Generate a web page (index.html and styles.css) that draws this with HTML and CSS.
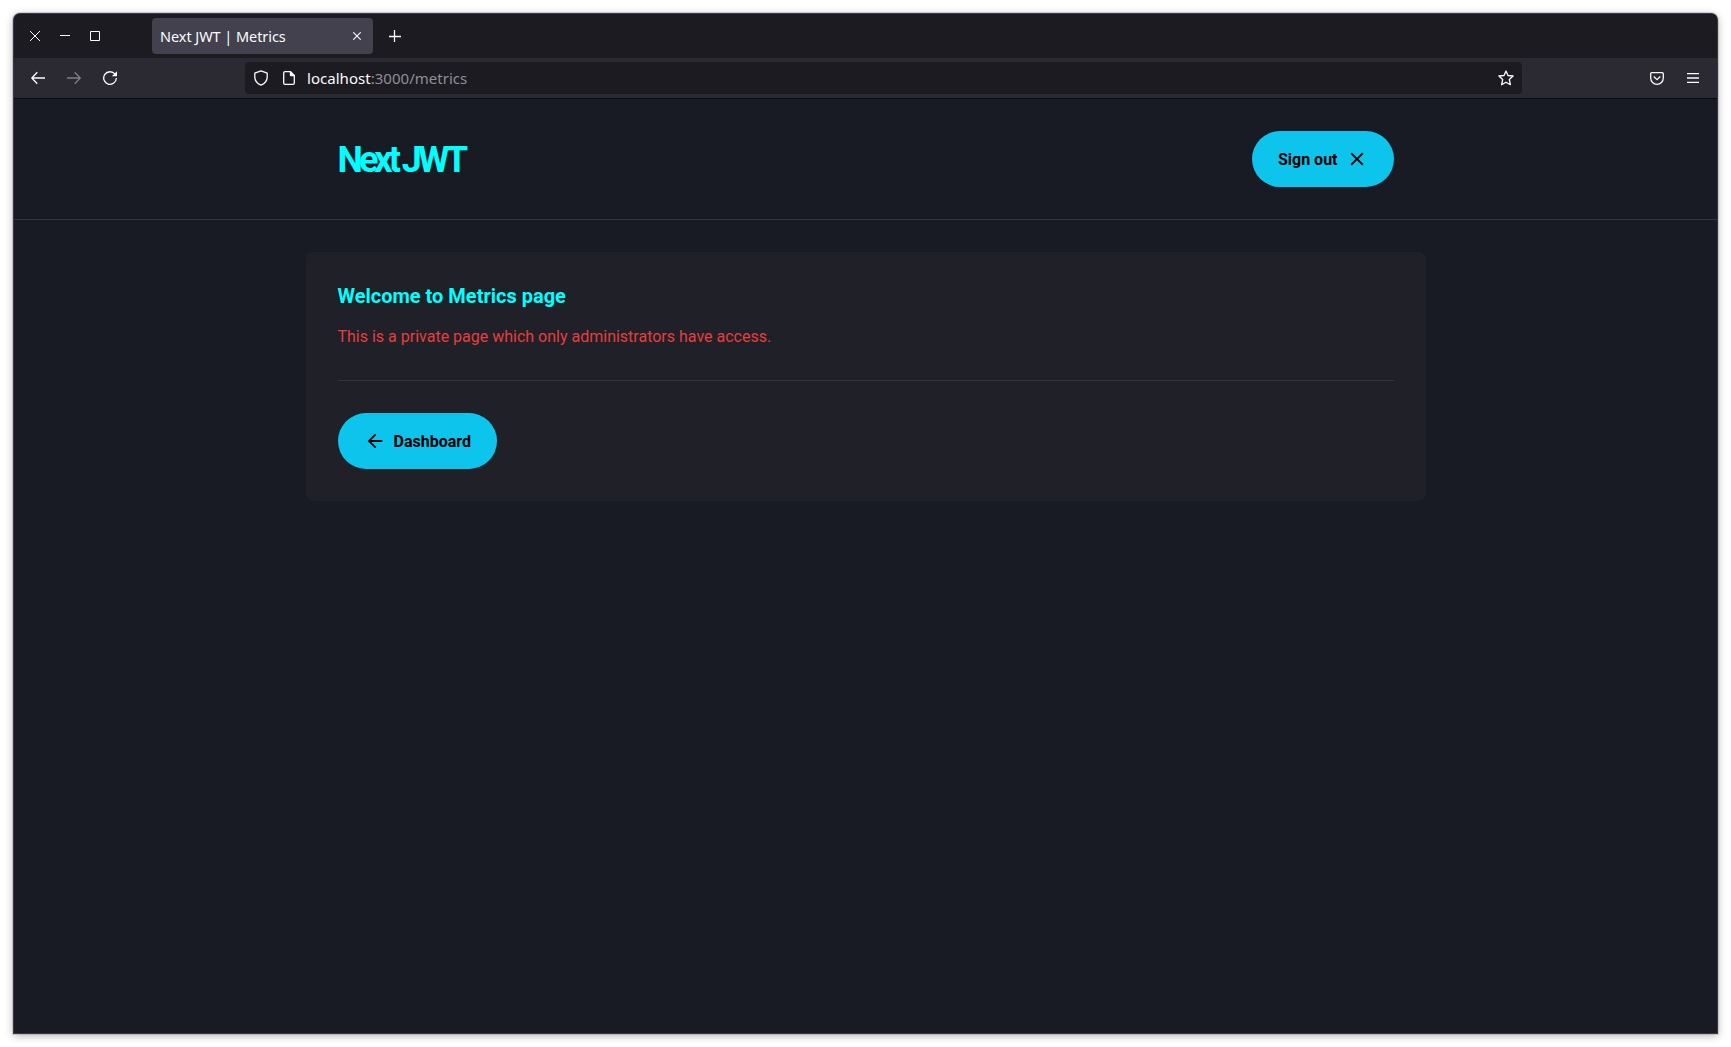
FILE: index.html
```html
<!DOCTYPE html>
<html lang="en">
<head>
<meta charset="utf-8">
<title>Next JWT | Metrics</title>
<link rel="stylesheet" href="styles.css">
</head>
<body>
<div class="window">
  <div class="titlebar">
    <div class="controls">
      <svg width="10" height="10" viewBox="0 0 10 10"><path d="M0 0l10 10M10 0L0 10"/></svg>
      <svg width="10" height="10" viewBox="0 0 10 10"><path d="M0 4.5h10"/></svg>
      <svg width="10" height="10" viewBox="0 0 10 10"><path d="M.5 .5h9v9h-9z"/></svg>
    </div>
    <div class="tab">
      <span class="tab-title">Next JWT | Metrics</span>
      <svg width="8" height="8" viewBox="0 0 8 8"><path d="M.3 .3l7.4 7.4M7.7 .3L.3 7.7"/></svg>
    </div>
    <svg class="new-tab" width="12" height="12" viewBox="0 0 12 12"><path d="M5.500 0v12M0 6.500h12"/></svg>
  </div>
  <div class="toolbar">
    <div class="nav">
      <svg width="14" height="14" viewBox="0 0 14 14"><path d="M14 7H1M6.3 1.3L.8 7l5.5 5.7"/></svg>
      <svg class="disabled" width="14" height="14" viewBox="0 0 14 14"><path d="M0 7h13M7.7 1.3L13.2 7l-5.5 5.7"/></svg>
      <svg width="14" height="14" viewBox="0 0 14 14"><path d="M12 3.2A6.3 6.3 0 1 0 13.3 7"/><path class="solid" d="M14 .2v5.1H8.8z"/></svg>
    </div>
    <div class="urlbar">
      <svg width="14" height="16" viewBox="0 0 14 16"><path d="M7 .8L13.2 3.2V7c0 3.8-2.4 6.6-6.2 8.2C3.200 13.600.8 10.800.8 7V3.200z"/></svg>
      <svg class="doc" width="12" height="14" viewBox="0 0 12 14"><path d="M2 .7h5.500l3.800 3.800V12a1.300 1.300 0 0 1-1.300 1.300H2A1.300 1.300 0 0 1 .7 12V2A1.300 1.300 0 0 1 2 .7z"/><path class="solid" d="M6.800 .5h1l3.700 3.700v1H8.100a1.300 1.300 0 0 1-1.300-1.300z"/></svg>
      <span class="url"><b>localhost</b>:3000/metrics</span>
      <svg class="star" width="16" height="16" viewBox="0 0 16 16"><path d="M8 1l2 4.500 5.100 .5-3.800 3.500 1.100 5.200L8 12.200l-4.400 2.500 1.100-5.200L.9 6 6 5.500z"/></svg>
    </div>
    <div class="actions">
      <svg width="14" height="13" viewBox="0 0 14 13"><path d="M1.800 .7h10.400a1.100 1.100 0 0 1 1.100 1.100V6a6.300 6.300 0 0 1-12.600 0V1.800A1.100 1.100 0 0 1 1.800 .7zM3.700 4.500L7 7.600l3.300-3.100"/></svg>
      <svg width="12" height="10" viewBox="0 0 12 10"><path d="M0 .5h12M0 5h12M0 9.500h12"/></svg>
    </div>
  </div>
  <div class="page">
    <header class="header">
      <div class="header-inner">
        <div class="logo">Next JWT</div>
        <div class="button">Sign out<svg width="22" height="22" viewBox="0 0 24 24"><path d="M19 6.410L17.590 5 12 10.590 6.410 5 5 6.410 10.590 12 5 17.590 6.410 19 12 13.410 17.590 19 19 17.590 13.410 12z"/></svg></div>
      </div>
    </header>
    <main class="card">
      <h1>Welcome to Metrics page</h1>
      <p>This is a private page which only administrators have access.</p>
      <div class="card-footer">
        <div class="button"><svg width="22" height="22" viewBox="0 0 24 24"><path d="M20 11H7.830l5.590-5.590L12 4l-8 8 8 8 1.410-1.410L7.830 13H20v-2z"/></svg>Dashboard</div>
      </div>
    </main>
  </div>
</div>
</body>
</html>
```
FILE: styles.css
```css
* { box-sizing: border-box; }

body {
  margin: 0;
  height: 1047px;
  padding: 14px;
  background: #fff;
  overflow: hidden;
}

svg { display: block; flex: none; }

.window {
  height: 1019px;
  display: flex;
  flex-direction: column;
  background: #191b24;
  border-radius: 6px 6px 0 0;
  box-shadow: 0 0 0 1px #38383d, 0 0 0 2px rgba(0, 0, 0, .12), 0 2px 9px 1px rgba(0, 0, 0, .28);
}

.titlebar,
.toolbar {
  display: flex;
  align-items: center;
  font-family: "Noto Sans", sans-serif;
  color: #fbfbfe;
}

.titlebar svg,
.toolbar svg {
  fill: none;
  stroke: #fbfbfe;
  stroke-width: 1.3;
  stroke-linejoin: round;
}

.toolbar svg .solid { fill: #fbfbfe; stroke: none; }

.titlebar {
  height: 44px;
  background: #1c1b22;
  border-radius: 6px 6px 0 0;
}

.controls {
  display: flex;
  gap: 20px;
  width: 138px;
  padding-left: 16px;
}

.controls svg { stroke-width: 1; }

.tab {
  display: flex;
  align-items: center;
  justify-content: space-between;
  width: 221px;
  height: 36px;
  padding: 0 12px 0 8px;
  border-radius: 4px;
  background: #42414d;
  font-size: 14.5px;
  letter-spacing: -.06px;
}

.tab svg { stroke-width: 1.1; }

.new-tab { margin-left: 16px; }

.toolbar {
  height: 41px;
  padding-right: 18px;
  border-bottom: 1px solid #0c0c0d;
  background: #2b2a33;
}

.nav {
  display: flex;
  gap: 22px;
  width: 231px;
  padding-left: 17px;
}

.nav .disabled { opacity: .4; }

.urlbar {
  display: flex;
  align-items: center;
  width: 1277px;
  height: 32px;
  padding: 0 8px 0 9px;
  border-radius: 4px;
  background: #1c1b22;
}

.doc { margin: 0 12px 0 15px; }

.url { color: #8f8f98; font-size: 15px; letter-spacing: .03px; }
.url b { color: #fbfbfe; font-weight: 400; }

.star { margin-left: auto; }

.actions {
  display: flex;
  align-items: center;
  gap: 23px;
  margin-left: auto;
}

.page {
  flex: 1;
  font-family: Roboto, sans-serif;
}

.header { border-bottom: 1px solid #323345; }

.header-inner {
  display: flex;
  align-items: center;
  justify-content: space-between;
  width: 1120px;
  height: 120px;
  margin: 0 auto;
  padding: 0 32px;
}

.logo {
  padding-top: 2px;
  color: #0ff;
  font-size: 36px;
  font-weight: 700;
  letter-spacing: -4px;
}

.button {
  display: inline-flex;
  align-items: center;
  gap: 8px;
  height: 56px;
  padding: 0 26px;
  border-radius: 28px;
  background: #0dc5ec;
  color: #000;
  font-size: 16px;
  font-weight: 700;
}

.card {
  width: 1120px;
  height: 249px;
  margin: 32px auto 0;
  padding: 32px;
  border-radius: 8px;
  background: #202028;
}

.card h1 {
  margin: 0;
  color: #0ff;
  font-size: 20px;
  line-height: 24px;
}

.card p {
  margin: 17px 0 31px;
  color: #e53e3e;
  font-size: 16px;
  line-height: 24px;
}

.card-footer {
  display: flex;
  padding-top: 32px;
  border-top: 1px solid #323345;
}
```
